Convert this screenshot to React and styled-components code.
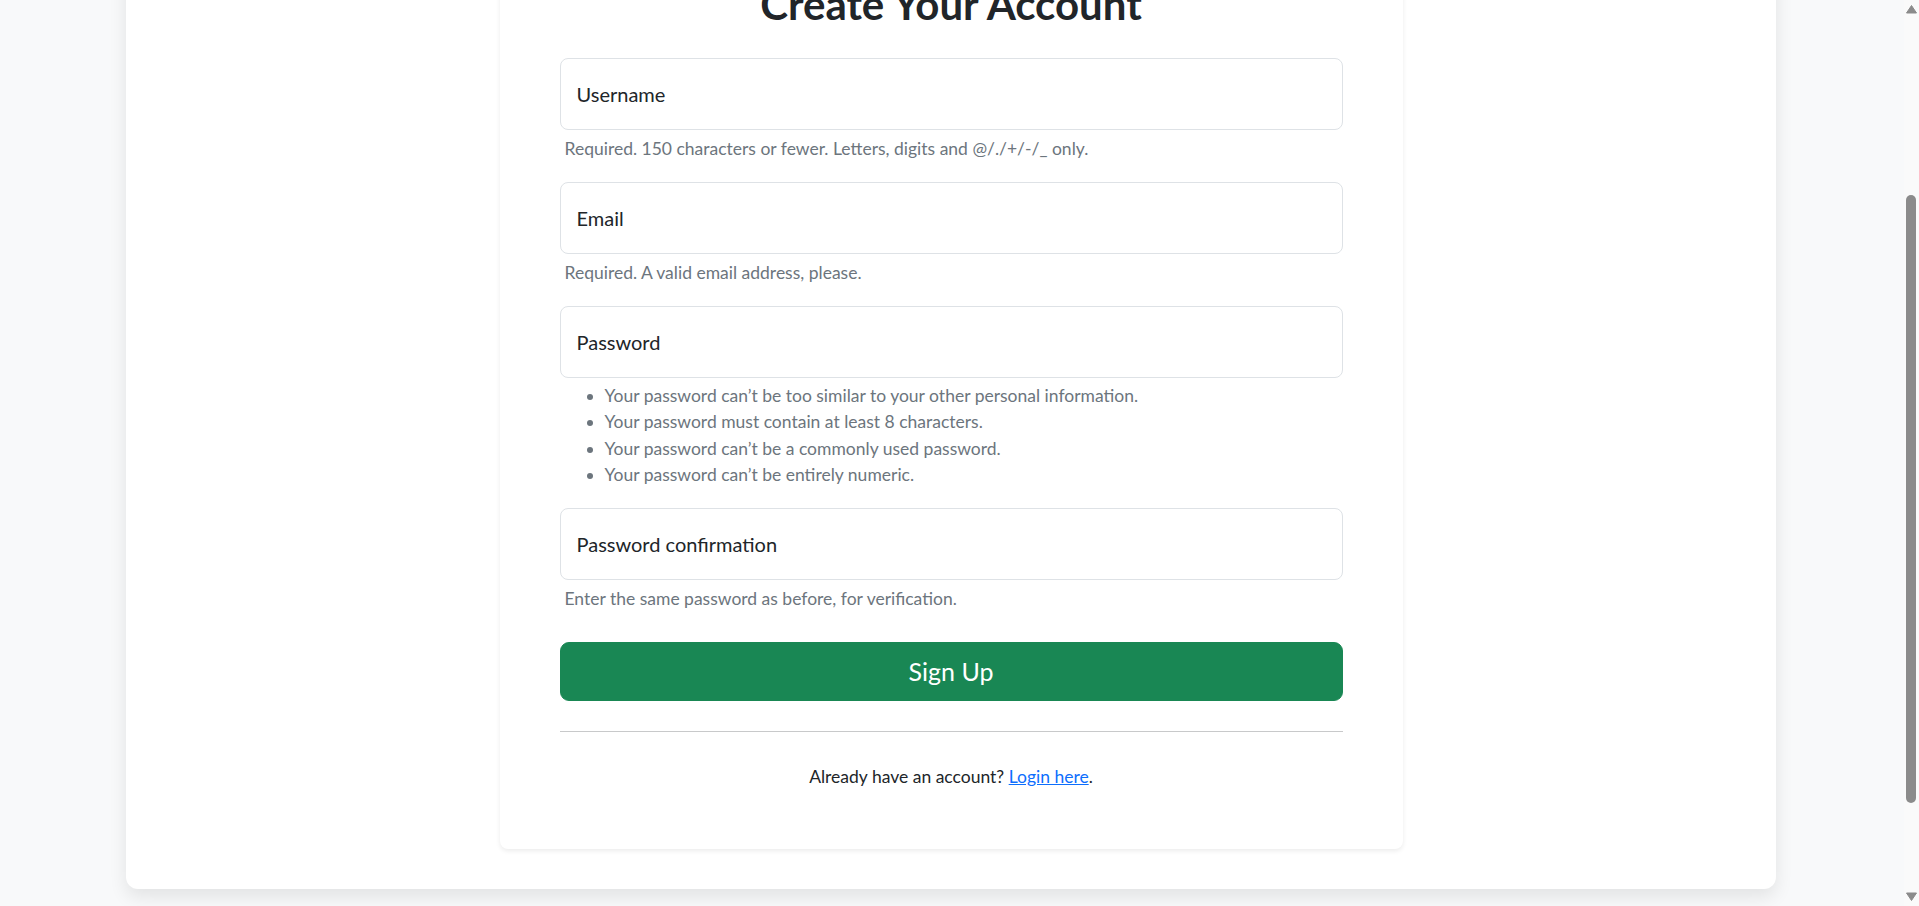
import { useLayoutEffect } from "react";
import styled, { createGlobalStyle } from "styled-components";

const GlobalStyle = createGlobalStyle`
  html {
    font-size: 20px;
  }
  body {
    margin: 0;
    background-color: #f8f9fa;
    color: #212529;
    font-family: "Segoe UI", Lato, "Open Sans", sans-serif;
  }
`;

// the page is scrolled part way down, with the classic scrollbar on the right
const SCROLL_TOP = 266;

const Page = styled.div`
  padding: 146px 17px 145px 0;
`;

const Shell = styled.main`
  width: 1650px;
  margin: 0 auto;
  padding: 40px 0;
  background-color: #fff;
  border-radius: 12px;
  box-shadow: 0 8px 18px rgba(0, 0, 0, 0.09);
`;

const FormCard = styled.section`
  box-sizing: border-box;
  width: 903px;
  margin: 0 auto;
  padding: 60px 60px 57px;
  background-color: #fff;
  border-radius: 8px;
  box-shadow: 0 2px 5px rgba(0, 0, 0, 0.08);
`;

const Title = styled.h2`
  margin: 0 0 30px;
  text-align: center;
  font-size: 42px;
  line-height: 48px;
  font-weight: 700;
`;

const Field = styled.div`
  margin-bottom: 20px;
`;

const Input = styled.input`
  display: block;
  box-sizing: border-box;
  width: 100%;
  height: 72px;
  padding: 0 16px;
  border: 1px solid #dee2e6;
  border-radius: 8px;
  background: #fff;
  font-family: inherit;
  font-size: 20px;
  color: #212529;
  outline: none;

  &::placeholder {
    color: #212529;
    opacity: 1;
  }
`;

const Hint = styled.div`
  margin-top: 5px;
  padding-left: 5px;
  font-size: 17.5px;
  line-height: 27px;
  color: #6c757d;
`;

const HintList = styled.ul`
  margin: 0;
  padding-left: 40px;

  li {
    line-height: 26.25px;
  }
`;

const SubmitButton = styled.button`
  display: block;
  width: 100%;
  margin-top: 30px;
  padding: 10px 20px;
  border: 1px solid #198754;
  border-radius: 9px;
  background-color: #198754;
  color: #fff;
  font-family: inherit;
  font-size: 25px;
  line-height: 37px;
  cursor: pointer;
`;

const Divider = styled.hr`
  margin: 30px 0;
  border: 0;
  border-top: 1px solid #c8c9ca;
`;

const Footer = styled.p`
  margin: 0;
  text-align: center;
  font-size: 17.5px;
  line-height: 30px;

  a {
    color: #0d6efd;
  }
`;

const ScrollRail = styled.div`
  position: fixed;
  top: 0;
  right: 0;
  width: 15px;
  height: 100vh;
  display: flex;
  flex-direction: column;
  background-color: #fafafa;
`;

const RailArrow = styled.svg`
  display: block;
  width: 15px;
  height: 17px;
  flex: none;
  fill: #8b8b8b;
`;

const RailTrack = styled.div`
  flex: 1;
  display: flex;
  flex-direction: column;
  align-items: center;
`;

const RailThumb = styled.div`
  width: 10px;
  margin-left: -1px;
  border-radius: 5px;
  background-color: #8b8b8b;
`;

const fields = [
  {
    name: "username",
    type: "text",
    placeholder: "Username",
    hint: "Required. 150 characters or fewer. Letters, digits and @/./+/-/_ only.",
  },
  {
    name: "email",
    type: "email",
    placeholder: "Email",
    hint: "Required. A valid email address, please.",
  },
  {
    name: "password1",
    type: "password",
    placeholder: "Password",
    rules: [
      "Your password can\u2019t be too similar to your other personal information.",
      "Your password must contain at least 8 characters.",
      "Your password can\u2019t be a commonly used password.",
      "Your password can\u2019t be entirely numeric.",
    ],
  },
  {
    name: "password2",
    type: "password",
    placeholder: "Password confirmation",
    hint: "Enter the same password as before, for verification.",
  },
];

function Scrollbar() {
  return (
    <ScrollRail aria-hidden="true">
      <RailArrow viewBox="0 0 15 17">
        <path d="M2.5 13 L7.5 5.5 L12.5 13 Z" strokeLinejoin="round" stroke="#8b8b8b" strokeWidth="1" />
      </RailArrow>
      <RailTrack>
        <RailThumb style={{ marginTop: 178, height: 608 }} />
      </RailTrack>
      <RailArrow viewBox="0 0 15 17">
        <path d="M2.5 4 L7.5 11.5 L12.5 4 Z" strokeLinejoin="round" stroke="#8b8b8b" strokeWidth="1" />
      </RailArrow>
    </ScrollRail>
  );
}

export default function App() {
  useLayoutEffect(() => {
    window.scrollTo(0, SCROLL_TOP);
  }, []);

  return (
    <>
      <GlobalStyle />
      <Page>
        <Shell>
          <FormCard>
            <Title>Create Your Account</Title>
            <form onSubmit={(e) => e.preventDefault()}>
              {fields.map((f) => (
                <Field key={f.name}>
                  <Input name={f.name} type={f.type} placeholder={f.placeholder} />
                  <Hint>
                    {f.rules ? (
                      <HintList>
                        {f.rules.map((r) => (
                          <li key={r}>{r}</li>
                        ))}
                      </HintList>
                    ) : (
                      f.hint
                    )}
                  </Hint>
                </Field>
              ))}
              <SubmitButton type="submit">Sign Up</SubmitButton>
            </form>
            <Divider />
            <Footer>
              Already have an account? <a href="#login">Login here</a>.
            </Footer>
          </FormCard>
        </Shell>
      </Page>
      <Scrollbar />
    </>
  );
}
